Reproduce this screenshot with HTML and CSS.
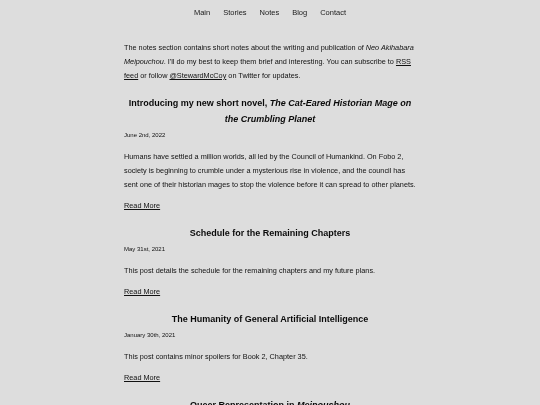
FILE: index.html
```html
<!DOCTYPE html>
<html lang="en">
<head>
<meta charset="utf-8">
<title>Notes</title>
<link rel="stylesheet" href="styles.css">
</head>
<body>
<div class="page">
<nav class="nav">
  <a href="#">Main</a>
  <a href="#">Stories</a>
  <a href="#">Notes</a>
  <a href="#">Blog</a>
  <a href="#">Contact</a>
</nav>
<main class="content">
  <p class="intro">The notes section contains short notes about the writing and publication of <em>Neo Akihabara Meipouchou</em>. I'll do my best to keep them brief and interesting. You can subscribe to <a class="link" href="#">RSS feed</a> or follow <a class="link" href="#">@StewardMcCoy</a> on Twitter for updates.</p>

  <article class="post">
    <h2 class="post-title">Introducing my new short novel, <em>The Cat-Eared Historian Mage on the Crumbling Planet</em></h2>
    <p class="date">June 2nd, 2022</p>
    <p class="summary">Humans have settled a million worlds, all led by the Council of Humankind. On Fobo 2, society is beginning to crumble under a mysterious rise in violence, and the council has sent one of their historian mages to stop the violence before it can spread to other planets.</p>
    <a class="link more" href="#">Read More</a>
  </article>

  <article class="post">
    <h2 class="post-title">Schedule for the Remaining Chapters</h2>
    <p class="date">May 31st, 2021</p>
    <p class="summary">This post details the schedule for the remaining chapters and my future plans.</p>
    <a class="link more" href="#">Read More</a>
  </article>

  <article class="post">
    <h2 class="post-title">The Humanity of General Artificial Intelligence</h2>
    <p class="date">January 30th, 2021</p>
    <p class="summary">This post contains minor spoilers for Book 2, Chapter 35.</p>
    <a class="link more" href="#">Read More</a>
  </article>

  <article class="post">
    <h2 class="post-title">Queer Representation in <em>Meipouchou</em></h2>
    <p class="date">January 2nd, 2021</p>
    <p class="summary">A few notes about queer representation in the story.</p>
    <a class="link more" href="#">Read More</a>
  </article>
</main>
</div>
</body>
</html>
```

FILE: styles.css
```css
html, body {
  margin: 0;
  padding: 0;
  background: #dddddd;
}
body {
  font-family: "Liberation Sans", Arial, sans-serif;
  color: #111111;
  font-size: 7.3px;
  line-height: 14px;
  -webkit-font-smoothing: antialiased;
}
.page {
  filter: grayscale(1);
  background: #dddddd;
}
.nav {
  display: flex;
  justify-content: center;
  gap: 13px;
  padding-top: 6px;
  font-size: 7.5px;
  line-height: 14px;
}
.nav a {
  color: #1a1a1a;
  text-decoration: none;
}
.content {
  width: 292px;
  margin: 0 auto;
  padding-top: 21px;
}
.intro {
  margin: 0;
}
.link {
  color: #111111;
  text-decoration: underline;
}
.post {
  margin-top: 12px;
}
.post-title {
  margin: 0;
  font-size: 9px;
  line-height: 16px;
  font-weight: bold;
  text-align: center;
  color: #0a0a0a;
}
.date {
  margin: 3px 0 0;
  font-size: 6px;
  line-height: 10px;
}
.summary {
  margin: 10px 0 0;
}
.more {
  display: block;
  width: max-content;
  margin-top: 7px;
}
```
